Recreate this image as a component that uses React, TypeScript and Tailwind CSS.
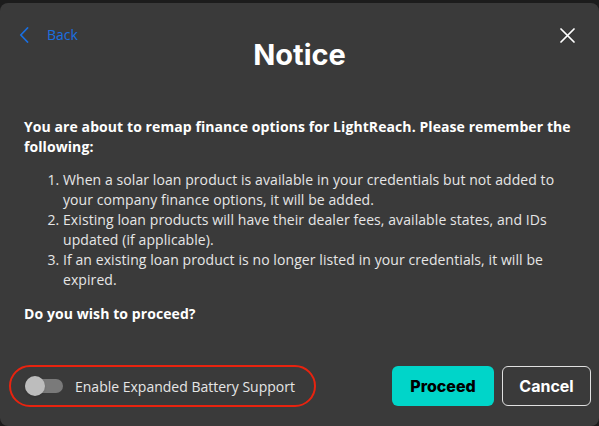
import React, { useState } from "react";

const heading = { fontFamily: "Inter, 'Liberation Sans', sans-serif" };
const body = { fontFamily: "'Open Sans', 'Noto Sans', sans-serif" };

function Chevron() {
  return (
    <svg width="10" height="16" viewBox="0 0 10 16" fill="none" aria-hidden>
      <path d="M8.5 1 L1.8 8 L8.5 15" stroke="currentColor" strokeWidth="1.8" strokeLinecap="round" strokeLinejoin="round" />
    </svg>
  );
}

function CloseIcon() {
  return (
    <svg width="15" height="15" viewBox="0 0 15 15" fill="none" aria-hidden>
      <path d="M1 1 L14 14 M14 1 L1 14" stroke="currentColor" strokeWidth="1.7" strokeLinecap="round" />
    </svg>
  );
}

export default function App() {
  const [on, setOn] = useState(false);

  return (
    <div className="h-[426px] w-[599px] overflow-hidden bg-[#1c1c1c] pt-[3px]" style={body}>
      <div className="flex h-[423px] flex-col rounded-[8px] bg-[#3a3a3a] px-6 pb-[19px] text-white">
        <div className="relative pt-[34px]">
          <button className="absolute left-[-5px] top-[22px] flex items-center gap-[18px] text-[#1a6fe0]">
            <Chevron />
            <span className="text-[14px] leading-5">Back</span>
          </button>
          <button className="absolute right-[0px] top-[25px] text-white">
            <CloseIcon />
          </button>
          <h2 className="text-center text-[29px] font-bold leading-9" style={heading}>
            Notice
          </h2>
        </div>

        <div className="mt-[44px] text-[14px] leading-5 tracking-[0.08px]">
          <p className="font-bold">
            You are about to remap finance options for LightReach. Please remember the following:
          </p>
          <ol className="mt-[13px] list-decimal pl-[39px] pr-4 text-[#e6e6e6]">
            <li>
              When a solar loan product is available in your credentials but not added to your
              company finance options, it will be added.
            </li>
            <li>
              Existing loan products will have their dealer fees, available states, and IDs updated
              (if applicable).
            </li>
            <li>
              If an existing loan product is no longer listed in your credentials, it will be
              expired.
            </li>
          </ol>
          <p className="mt-[14px] font-bold">Do you wish to proceed?</p>
        </div>

        <div className="mt-auto flex items-center">
          <label className="ml-[-15px] flex h-[42px] w-[307px] cursor-pointer items-center rounded-full border-2 border-[#e8230f] pl-[14px]">
            <span
              onClick={() => setOn(!on)}
              className="relative flex h-5 w-[38px] items-center"
            >
              <span className={`h-[14px] w-full rounded-full ${on ? "bg-[#0a8f88]" : "bg-[#7a7a7a]"}`} />
              <span
                className={`absolute top-0 h-5 w-5 rounded-full shadow ${on ? "left-[18px] bg-[#00d5c9]" : "left-0 bg-[#bdbdbd]"}`}
              />
            </span>
            <span className="ml-3 text-[14px] text-[#e6e6e6]">Enable Expanded Battery Support</span>
          </label>
          <div className="ml-auto mr-[-16px] flex gap-2" style={heading}>
            <button className="h-10 w-[102px] rounded-[6px] bg-[#00d5c9] text-[16px] font-extrabold text-black">
              Proceed
            </button>
            <button className="h-10 w-[89px] rounded-[6px] border border-[#e0e0e0] text-[16px] font-bold text-white">
              Cancel
            </button>
          </div>
        </div>
      </div>
    </div>
  );
}
